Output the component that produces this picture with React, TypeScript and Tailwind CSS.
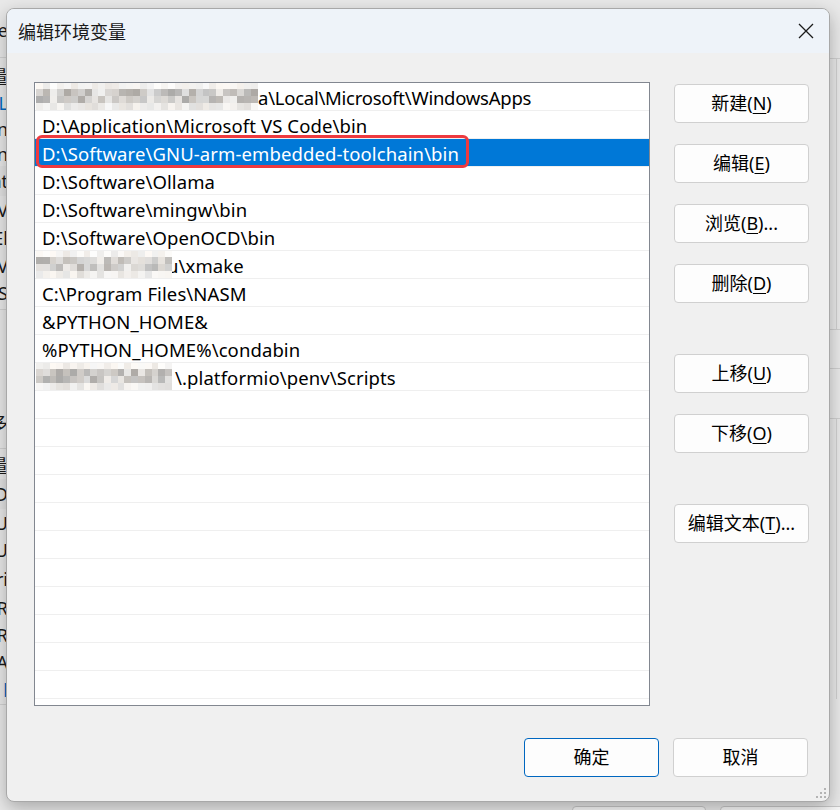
import React from "react";

function Mosaic({ w, seed }: { w: number; seed: number }) {
  let s = seed;
  const rnd = () => {
    s = (s * 9301 + 49297) % 233280;
    return s / 233280;
  };
  const cell = 7;
  const cols = Math.ceil(w / cell);
  const rows = [0, 1, 2, 3];
  return (
    <div className="flex flex-col shrink-0 overflow-hidden" style={{ width: w, height: 27 }}>
      {rows.map((r) => (
        <div key={r} className="flex">
          {Array.from({ length: cols }).map((_, c) => {
            let v: number;
            if (r === 0) v = 236 + Math.floor(rnd() * 19);
            else if (r === 3) v = 224 + Math.floor(rnd() * 28);
            else v = 172 + Math.floor(rnd() * 70);
            const tint = Math.floor(rnd() * 10);
            return (
              <div
                key={c}
                style={{
                  width: cell,
                  height: r === 0 ? 6 : 7,
                  backgroundColor: `rgb(${v},${v - tint / 2},${v - tint})`,
                }}
              />
            );
          })}
        </div>
      ))}
    </div>
  );
}

type Row = { text?: string; blur?: number; seed?: number; selected?: boolean; shift?: number; tight?: boolean };

const rows: Row[] = [
  { blur: 222, seed: 17, text: "a\\Local\\Microsoft\\WindowsApps", shift: 0, tight: true },
  { text: "D:\\Application\\Microsoft VS Code\\bin" },
  { text: "D:\\Software\\GNU-arm-embedded-toolchain\\bin", selected: true },
  { text: "D:\\Software\\Ollama" },
  { text: "D:\\Software\\mingw\\bin" },
  { text: "D:\\Software\\OpenOCD\\bin" },
  { blur: 136, seed: 91, text: "u\\xmake", shift: -5 },
  { text: "C:\\Program Files\\NASM" },
  { text: "&PYTHON_HOME&" },
  { text: "%PYTHON_HOME%\\condabin" },
  { blur: 136, seed: 203, text: "\\.platformio\\penv\\Scripts", shift: 3 },
];

const allRows: Row[] = [...rows, ...Array.from({ length: 12 }).map(() => ({}))];

function Btn({ label, u, after, primary }: { label: string; u?: string; after?: string; primary?: boolean }) {
  return (
    <div
      className={`w-[135px] h-[39px] shrink-0 rounded-[4px] bg-[#fdfdfd] flex items-center justify-center text-[18px] text-black ${
        primary ? "border border-[#0067c0]" : "border border-[#d0d0d0]"
      }`}
    >
      <span>
        {label}
        {u !== undefined && (
          <>
            (<span className="underline underline-offset-[3px]">{u}</span>)
          </>
        )}
        {after}
      </span>
    </div>
  );
}

type FragT = { h: number; t?: string; blue?: boolean; bg?: boolean; line?: boolean };

const leftTop: FragT[] = [
  { h: 17 },
  { h: 26, t: "e" },
  { h: 14 },
  { h: 1, line: true },
  { h: 6 },
  { h: 26, t: "量" },
  { h: 26, t: "L", blue: true },
  { h: 25, t: "n" },
  { h: 25, t: "n" },
  { h: 30, t: "nt", bg: true },
  { h: 28, t: "V" },
  { h: 28, t: "El" },
  { h: 28, t: "V" },
  { h: 26, t: "S" },
  { h: 3 },
  { h: 1, line: true },
  { h: 100 },
  { h: 26, t: "多" },
  { h: 12 },
  { h: 1, line: true },
  { h: 4 },
  { h: 26, t: "量" },
  { h: 30, t: "D", bg: true },
  { h: 27, t: "U" },
  { h: 27, t: "U" },
  { h: 31, t: "ri" },
  { h: 27, t: "R" },
  { h: 27, t: "R" },
  { h: 28, t: "A" },
  { h: 28, t: "l", blue: true },
  { h: 1, line: true },
];

function LeftStrip() {
  return (
    <div className="absolute left-0 top-0 w-[8px] h-[810px] flex flex-col">
      {leftTop.map((f, i) =>
        f.line ? (
          <div key={i} className="h-[1px] shrink-0 bg-[#d2d2d2]" />
        ) : (
          <div
            key={i}
            className={`shrink-0 flex items-center justify-end overflow-hidden ${f.bg ? "bg-[#e3e3e3]" : ""}`}
            style={{ height: f.h }}
          >
            {f.t && (
              <span className={`text-[18px] leading-none whitespace-nowrap ${f.blue ? "text-[#0067c0]" : "text-[#1a1a1a]"}`}>
                {f.t}
              </span>
            )}
          </div>
        )
      )}
    </div>
  );
}

function RightStrip() {
  return (
    <div className="absolute left-[830px] top-0 w-[10px] h-[810px] flex flex-col">
      <div className="h-[58px] shrink-0" />
      <div className="h-[272px] shrink-0 border-t border-b border-[#cfcfcf] flex">
        <div className="w-[6px]" />
        <div className="w-[1px] bg-[#cfcfcf]" />
      </div>
      <div className="h-[39px] shrink-0 border-b border-[#cfcfcf]" />
      <div className="h-[50px] shrink-0 border-b border-[#cfcfcf]" />
      <div className="h-[280px] shrink-0 flex">
        <div className="w-[6px]" />
        <div className="w-[1px] bg-[#cfcfcf]" />
      </div>
    </div>
  );
}

export default function App() {
  return (
    <div className="relative w-[840px] h-[810px] overflow-hidden bg-[#e9e9e9] font-['Noto_Sans','Noto_Sans_CJK_SC',sans-serif]">
      <LeftStrip />
      <RightStrip />
      <div className="absolute left-[572px] top-[806px] flex gap-[14px]">
        <div className="w-[134px] h-[20px] rounded-[4px] bg-[#f7f7f7] border border-[#c8c8c8]" />
        <div className="w-[134px] h-[20px] rounded-[4px] bg-[#f7f7f7] border border-[#c8c8c8]" />
      </div>

      {/* dialog window */}
      <div className="absolute left-[6px] top-[8px] w-[824px] h-[794px] rounded-[8px] border border-[#a8a8a8] bg-[#f0f0f0] shadow-[0_6px_18px_rgba(0,0,0,0.28)] overflow-hidden flex flex-col">
        {/* title bar */}
        <div className="h-[44px] shrink-0 bg-[#eef3f9] flex items-center justify-between">
          <div className="pl-[11px] text-[18px] text-[#1a1a1a] font-['Noto_Sans_CJK_SC',sans-serif]">编辑环境变量</div>
          <div className="w-[46px] h-[44px] flex items-center justify-center">
            <svg width="16" height="16" viewBox="0 0 16 16">
              <path d="M1 1 L15 15 M15 1 L1 15" stroke="#1a1a1a" strokeWidth="1.3" fill="none" />
            </svg>
          </div>
        </div>
        {/* body */}
        <div className="flex-1 flex flex-col pl-[27px] pt-[29px] pr-[21px]">
          <div className="flex gap-[24px]">
            {/* list */}
            <div className="w-[616px] h-[624px] shrink-0 bg-white border border-[#828790] overflow-hidden">
              {allRows.map((r, i) => (
                <div
                  key={i}
                  className={`relative h-[28px] flex items-center border-b border-[#efefef] ${
                    r.selected ? "bg-[#0078d7] text-white" : "text-black"
                  }`}
                >
                  {r.blur ? (
                    <>
                      <div className="relative z-10 ml-[1px]">
                        <Mosaic w={r.blur} seed={r.seed || 1} />
                      </div>
                      <span
                        className={`pt-[2px] text-[18.5px] whitespace-nowrap ${
                          r.tight ? "tracking-[-0.25px]" : "tracking-[0.1px]"
                        }`}
                        style={{ marginLeft: r.shift }}
                      >
                        {r.text}
                      </span>
                    </>
                  ) : (
                    r.text && (
                      <span className="pl-[7px] pt-[2px] text-[18.5px] tracking-[0.1px] whitespace-nowrap">{r.text}</span>
                    )
                  )}
                  {r.selected && (
                    <div className="absolute left-[1px] top-[-4px] w-[433px] h-[33px] rounded-[6px] border-[3px] border-[#ee3a3f]" />
                  )}
                </div>
              ))}
            </div>
            {/* buttons */}
            <div className="flex flex-col gap-[21px] pt-[2px]">
              <Btn label="新建" u="N" />
              <Btn label="编辑" u="E" />
              <Btn label="浏览" u="B" after="..." />
              <Btn label="删除" u="D" />
              <div className="mt-[30px]">
                <Btn label="上移" u="U" />
              </div>
              <Btn label="下移" u="O" />
              <div className="mt-[30px]">
                <Btn label="编辑文本" u="T" after="..." />
              </div>
            </div>
          </div>
          <div className="flex justify-end gap-[14px] mt-[32px]">
            <Btn label="确定" primary />
            <Btn label="取消" />
          </div>
          {/* resize grip */}
          <div className="flex-1 flex items-end justify-end pb-[1px] mr-[-19px]">
            <svg width="12" height="12" viewBox="0 0 12 12">
              <rect x="9" y="0" width="2" height="2" fill="#b4b4b4" />
              <rect x="9" y="4" width="2" height="2" fill="#b4b4b4" />
              <rect x="5" y="4" width="2" height="2" fill="#b4b4b4" />
              <rect x="9" y="8" width="2" height="2" fill="#b4b4b4" />
              <rect x="5" y="8" width="2" height="2" fill="#b4b4b4" />
              <rect x="1" y="8" width="2" height="2" fill="#b4b4b4" />
            </svg>
          </div>
        </div>
      </div>
    </div>
  );
}
